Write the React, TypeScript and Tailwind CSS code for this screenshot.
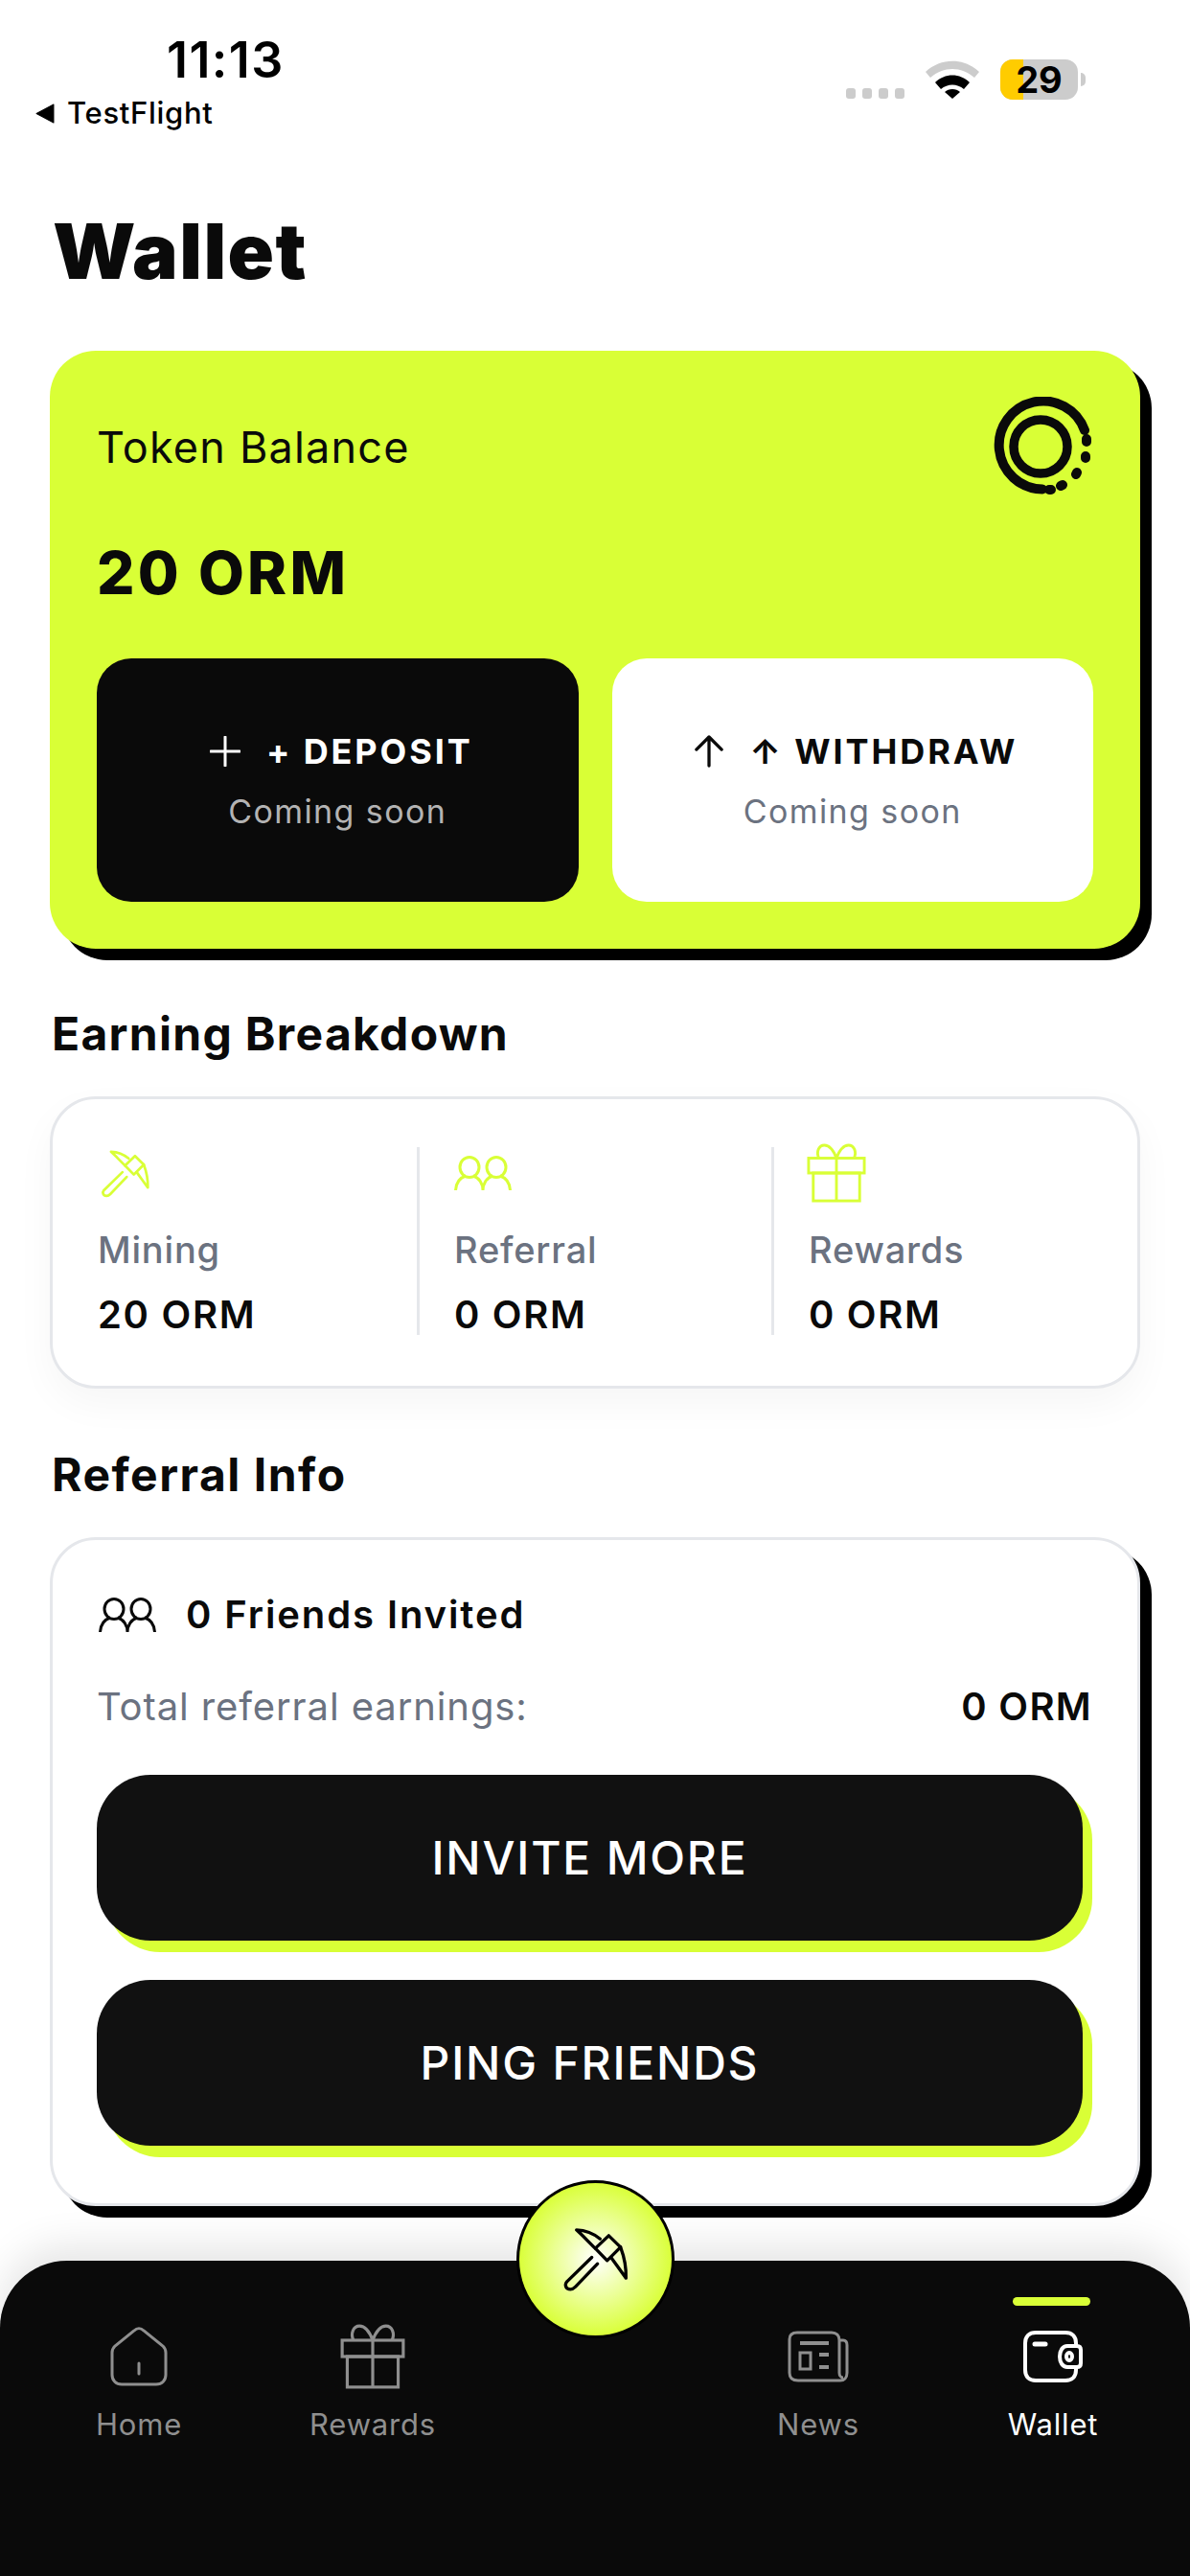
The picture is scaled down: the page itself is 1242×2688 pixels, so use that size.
const inter = "[font-family:Inter,'Noto_Sans',sans-serif]";

function PickaxeIcon({ className, sw = 10 }: { className?: string; sw?: number }) {
  return (
    <svg viewBox="140 195 210 205" className={className} fill="none" stroke="currentColor" strokeWidth={sw} strokeLinecap="round" strokeLinejoin="round">
      <path d="M285 222 L322 258 L280 300 L243 262 Z" />
      <path d="M258 232 C236 214 210 205 184 204 C204 222 222 242 243 262" />
      <path d="M322 258 C334 290 340 325 339 355 C322 332 308 312 292 290" />
      <path d="M232 290 L154 366 C146 376 150 390 165 390 C172 390 177 386 181 382 L250 310" />
    </svg>
  );
}

function PeopleIcon({ className, sw = 3 }: { className?: string; sw?: number }) {
  return (
    <svg viewBox="0 0 60 37" className={className} fill="none" stroke="currentColor" strokeWidth={sw}>
      <ellipse cx="16" cy="12" rx="10" ry="10.5" />
      <ellipse cx="44" cy="12" rx="10" ry="10.5" />
      <path d="M1.5 36 C2 28 6 23 12 21" />
      <path d="M20 21 C26 23 30 29 30 36 C30 29 34 23 40 21" />
      <path d="M48 21 C54 23 58 28 58.5 36" />
    </svg>
  );
}

function GiftIcon({ className, sw = 3 }: { className?: string; sw?: number }) {
  return (
    <svg viewBox="0 0 64 64" className={className} fill="none" stroke="currentColor" strokeWidth={sw}>
      <rect x="2" y="16" width="60" height="16" />
      <rect x="7" y="32" width="50" height="30" />
      <path d="M32 16 V62" />
      <path d="M32 16 C29 8 25 2 19 2 C13 2 10 9 13 16" />
      <path d="M32 16 C35 8 39 2 45 2 C51 2 54 9 51 16" />
    </svg>
  );
}

function HomeIcon({ className }: { className?: string }) {
  return (
    <svg viewBox="0 0 60 62" className={className} fill="none" stroke="currentColor" strokeWidth="3">
      <path d="M25 4 C28 1 32 1 35 4 L55 20 C57 22 58 24 58 27 V50 C58 56 54 60 48 60 H12 C6 60 2 56 2 50 V27 C2 24 3 22 5 20 Z" />
      <path d="M30 38 V49" strokeLinecap="round" />
    </svg>
  );
}

function NewsIcon({ className }: { className?: string }) {
  return (
    <svg viewBox="0 0 64 54" className={className} fill="none" stroke="currentColor" strokeWidth="3">
      <path d="M54 10 H58 C61 10 62 12 62 15 V44 C62 49 59 52 55 52 H11 C5 52 2 49 2 44 V9 C2 4 5 2 10 2 H46 C51 2 54 5 54 10 V44 C54 47 56 49 58 49" />
      <path d="M13 13 H43" strokeWidth="4" />
      <rect x="13" y="23" width="11" height="17" />
      <path d="M33 25 H43 M33 38 H43" strokeWidth="4" />
    </svg>
  );
}

function WalletIcon({ className }: { className?: string }) {
  return (
    <svg viewBox="0 0 62 54" className={className} fill="none" stroke="currentColor" strokeWidth="4">
      <path d="M55 16 V13 C55 6 51 2 44 2 H13 C6 2 2 6 2 13 V41 C2 48 6 52 13 52 H44 C51 52 55 48 55 41 V38" />
      <path d="M46 16 H56 C59 16 60 18 60 20 V34 C60 36 59 38 56 38 H46 C41 38 38 33 38 27 C38 21 41 16 46 16 Z" />
      <ellipse cx="48" cy="27" rx="3" ry="4" />
      <path d="M12 14 H23" strokeWidth="5" strokeLinecap="round" />
    </svg>
  );
}

function OrmLogo() {
  return (
    <svg viewBox="0 0 104 104" className="w-[104px] h-[104px]" fill="none" stroke="#0a0a0a" strokeLinecap="round">
      <circle cx="49" cy="52" r="28" strokeWidth="9.5" />
      <path d="M51 96.5 A 46 46 0 1 1 95 35" strokeWidth="10" />
      <path d="M97 44 L97 47 M96 62 L96 64 M87 79 L86 81 M72 92 L70 93 M60 97 L58 97" strokeWidth="10" />
    </svg>
  );
}

function StatusBar() {
  return (
    <div className="flex justify-between h-[190px]">
      <div>
        <div className={`pl-[174px] pt-[34px] text-[52px] leading-[58px] font-semibold tracking-[1.4px] text-black ${inter}`}>11:13</div>
        <div className="flex items-center pl-[36px] mt-[6px] gap-[13px]">
          <svg viewBox="0 0 20 20" className="w-[21px] h-[21px]"><path d="M19 1 V19 L2 10 Z" fill="#000" stroke="#000" strokeWidth="1" strokeLinejoin="round" /></svg>
          <span className={`text-[31px] leading-[40px] font-medium tracking-[0.7px] text-black ${inter}`}>TestFlight</span>
        </div>
      </div>
      <div className="flex items-start pr-[109px] pt-[62px]">
        <div className="flex gap-[7px] mt-[30px]">
          <div className="w-[10px] h-[11px] rounded-[3px] bg-[#cccccc]" />
          <div className="w-[10px] h-[11px] rounded-[3px] bg-[#cccccc]" />
          <div className="w-[10px] h-[11px] rounded-[3px] bg-[#cccccc]" />
          <div className="w-[10px] h-[11px] rounded-[3px] bg-[#cccccc]" />
        </div>
        <svg viewBox="0 0 56 40" className="w-[56px] h-[40px] ml-[22px] mt-[1px]">
          <path d="M0 12 C16 -3 40 -3 56 12 L51 18 C37 6 19 6 5 18 Z" fill="#cccccc" />
          <path d="M10 23 C20 13 36 13 46 23 L40 30 C33 24 23 24 16 30 Z" fill="#000" />
          <path d="M20 33 C24 29 32 29 36 33 L28 40 Z" fill="#000" />
        </svg>
        <div className="relative w-[81px] h-[42px] ml-[22px] rounded-[13px] bg-[#cccccc]">
          <div className="w-[24px] h-full rounded-l-[13px] bg-[#ffcc00]" />
          <span className={`absolute inset-0 flex items-center justify-center text-[38px] leading-[42px] font-bold text-black ${inter}`}>29</span>
        </div>
        <div className="w-[5px] h-[14px] ml-[3px] mt-[14px] rounded-r-full bg-[#cccccc]" />
      </div>
    </div>
  );
}

function ActionButton({ dark, icon, label }: { dark?: boolean; icon: React.ReactNode; label: string }) {
  return (
    <div className={`flex-1 h-[254px] pt-[4px] rounded-[36px] flex flex-col items-center justify-center ${dark ? "bg-[#0a0a0a] text-white" : "bg-white text-[#0a0a0a]"}`}>
      <div className="flex items-center gap-[27px] h-[40px] pl-[8px]">
        {icon}
        <span className={`text-[36px] leading-[40px] font-bold tracking-[2.9px] ${inter}`}>{label}</span>
      </div>
      <div className={`mt-[21px] text-[34px] leading-[44px] tracking-[1.4px] ${dark ? "text-[#b3b3b3]" : "text-[#6b7280]"} ${inter}`}>Coming soon</div>
    </div>
  );
}

function StatCol({ icon, label, value, className }: { icon: React.ReactNode; label: string; value: string; className?: string }) {
  return (
    <div className={`h-[196px] ${className ?? ""}`}>
      <div className="h-[68px] flex items-start">{icon}</div>
      <div className={`mt-[17px] text-[38px] leading-[44px] font-medium text-[#6b7280] tracking-[0.8px] ${inter}`}>{label}</div>
      <div className={`mt-[23px] text-[40px] leading-[45px] font-semibold text-[#0a0a0a] tracking-[1.7px] ${inter}`}>{value}</div>
    </div>
  );
}

function LimeButton({ label }: { label: string }) {
  return (
    <div className="w-[1029px] h-[173px] rounded-[56px] bg-[#111111] shadow-[10px_12px_0_#d9ff36] flex items-center justify-center">
      <span className={`text-[48px] leading-[56px] font-medium text-white tracking-[1.8px] ${inter}`}>{label}</span>
    </div>
  );
}

function NavItem({ icon, label, active, className }: { icon: React.ReactNode; label: string; active?: boolean; className?: string }) {
  return (
    <div className={`flex flex-col items-center w-[140px] ${active ? "text-white" : "text-[#8f8f8f]"} ${className ?? ""}`}>
      <div className="h-[72px] flex items-center justify-center">{icon}</div>
      <div className={`mt-[15px] text-[31px] leading-[40px] tracking-[0.8px] ${inter}`}>{label}</div>
    </div>
  );
}

export default function App() {
  return (
    <div className="relative w-[1242px] h-[2688px] bg-white overflow-hidden">
      <StatusBar />

      <h1 className={`pl-[55px] mt-[24px] text-[80px] leading-[96px] font-black text-[#0a0a0a] tracking-[1.5px] ${inter}`}>Wallet</h1>

      <div className="px-[52px] mt-[56px]">
        {/* Balance card */}
        <div className="w-[1138px] rounded-[48px] bg-[#d9ff36] shadow-[12px_12px_0_#000] px-[49px] pt-[48px] pb-[49px]">
          <div className="flex justify-between">
            <span className={`mt-[28px] text-[45px] leading-[50px] tracking-[1.2px] text-[#0a0a0a] ${inter}`}>Token Balance</span>
            <OrmLogo />
          </div>
          <div className={`mt-[44px] text-[62px] leading-[72px] font-extrabold tracking-[3.3px] text-[#0a0a0a] ${inter}`}>20 ORM</div>
          <div className="flex gap-[35px] mt-[53px]">
            <ActionButton dark label="+ DEPOSIT" icon={
              <svg viewBox="0 0 32 32" className="w-[32px] h-[32px]" stroke="currentColor" strokeWidth="3" strokeLinecap="round"><path d="M16 1 V31 M1 16 H31" /></svg>
            } />
            <ActionButton label="↑ WITHDRAW" icon={
              <svg viewBox="0 0 32 36" className="w-[30px] h-[34px]" fill="none" stroke="currentColor" strokeWidth="3.5" strokeLinecap="round" strokeLinejoin="round"><path d="M16 34 V2 M2 16 L16 2 L30 16" /></svg>
            } />
          </div>
        </div>

        <h2 className={`mt-[61px] pl-[2px] text-[48px] leading-[56px] font-bold tracking-[1.3px] text-[#0a0a0a] ${inter}`}>Earning Breakdown</h2>

        {/* Earning breakdown */}
        <div className="mt-[37px] w-[1138px] h-[305px] rounded-[48px] border-[3px] border-[#e5e7eb] bg-white shadow-[0_16px_40px_rgba(0,0,0,0.04)] flex pt-[50px]">
          <StatCol className="w-[383px] pl-[47px] border-r-[3px] border-[#e5e7eb]" label="Mining" value="20 ORM" icon={<PickaxeIcon className="w-[52px] h-[52px] ml-[3px] mt-[2px] text-[#d9ff36]" sw={11} />} />
          <StatCol className="w-[370px] pl-[36px] border-r-[3px] border-[#e5e7eb]" label="Referral" value="0 ORM" icon={<PeopleIcon className="w-[60px] h-[37px] mt-[9px] text-[#d9ff36]" />} />
          <StatCol className="pl-[36px]" label="Rewards" value="0 ORM" icon={<GiftIcon className="w-[62px] h-[62px] -ml-[2px] -mt-[4px] text-[#d9ff36]" />} />
        </div>

        <h2 className={`mt-[62px] pl-[2px] text-[48px] leading-[56px] font-bold tracking-[1.5px] text-[#0a0a0a] ${inter}`}>Referral Info</h2>

        {/* Referral card */}
        <div className="mt-[37px] w-[1138px] h-[698px] rounded-[48px] border-[3px] border-[#e5e7eb] bg-white shadow-[12px_12px_0_#000] pl-[46px] pr-[47px] pt-[54px]">
          <div className="flex items-center gap-[31px] h-[48px]">
            <PeopleIcon className="w-[60px] h-[37px] ml-[2px] text-[#0a0a0a]" />
            <span className={`text-[40px] leading-[48px] font-semibold tracking-[1.9px] text-[#0a0a0a] ${inter}`}>0 Friends Invited</span>
          </div>
          <div className="flex justify-between items-center mt-[47px] h-[50px]">
            <span className={`text-[40px] leading-[50px] tracking-[0.9px] text-[#6b7280] ${inter}`}>Total referral earnings:</span>
            <span className={`text-[40px] leading-[50px] font-semibold tracking-[1.3px] text-[#0a0a0a] ${inter}`}>0 ORM</span>
          </div>
          <div className="flex flex-col gap-[41px] mt-[46px]">
            <LimeButton label="INVITE MORE" />
            <LimeButton label="PING FRIENDS" />
          </div>
        </div>
      </div>

      {/* Bottom navigation */}
      <div className="absolute left-0 right-0 bottom-0 h-[329px] rounded-t-[70px] bg-[#0a0a0a] shadow-[0_-16px_40px_rgba(0,0,0,0.1)] flex pt-[64px]">
        <NavItem className="ml-[75px]" label="Home" icon={<HomeIcon className="w-[60px] h-[62px]" />} />
        <NavItem className="ml-[104px]" label="Rewards" icon={<GiftIcon className="w-[68px] h-[68px]" />} />
        <NavItem className="ml-[325px]" label="News" icon={<NewsIcon className="w-[64px] h-[54px]" />} />
        <NavItem className="ml-[105px]" active label="Wallet" icon={<WalletIcon className="w-[62px] h-[54px]" />} />
        <div className="absolute left-[1057px] top-[38px] w-[81px] h-[9px] rounded-full bg-[#d9ff36]" />
      </div>

      {/* Mine button */}
      <div className="absolute left-[539px] top-[2275px] w-[165px] h-[165px] rounded-full border-[3px] border-black bg-[radial-gradient(circle,#ffffff_0%,#d9ff36_72%)] flex items-center justify-center">
        <PickaxeIcon className="w-[70px] h-[70px] text-black" sw={10} />
      </div>
    </div>
  );
}
